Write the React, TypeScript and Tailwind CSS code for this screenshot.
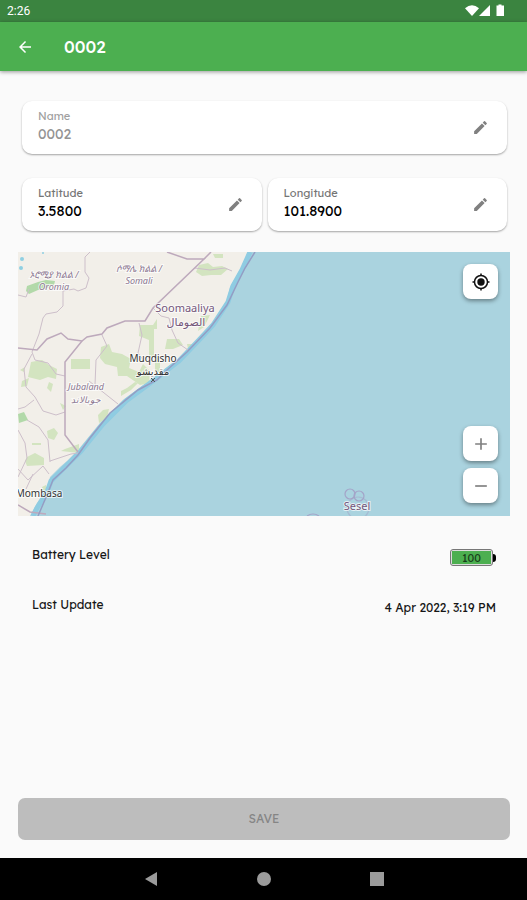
import { useState } from "react";
import { MdArrowBack, MdEdit, MdAdd, MdRemove } from "react-icons/md";

const uiFont = "font-['Lexend_Deca',Lexend,Inter,sans-serif]";

function StatusBar() {
  return (
    <div className="flex h-[22px] items-center justify-between bg-[#3b8440] pr-[22px] pl-[7px] text-white">
      <span className="font-[Roboto,sans-serif] text-xs">2:26</span>
      <svg viewBox="0 0 40 14" className="h-[14px] w-10" fill="currentColor" aria-hidden="true">
        <path d="M0 4.200Q7 -1.500 14 4.200L7 12Z" />
        <path d="M25 1V12H14Z" />
        <path d="M33.500 0.500h3V1.500H39V12H31.500V1.500h2Z" />
      </svg>
    </div>
  );
}

type FieldProps = { id: string; label: string; initial: string; disabled?: boolean };

function Field({ id, label, initial, disabled = false }: FieldProps) {
  const [value, setValue] = useState(initial);
  return (
    <div className="flex h-[53px] min-w-0 flex-1 items-center rounded-[10px] bg-white pr-[18px] pl-4 shadow-[0_1px_2px_rgba(0,0,0,0.35)]">
      <div className="flex min-w-0 flex-1 flex-col pb-1">
        <label htmlFor={id} className={`text-[11px] leading-4 ${disabled ? "text-[#a0a0a0]" : "text-[#757575]"}`}>
          {label}
        </label>
        <input
          id={id}
          value={value}
          disabled={disabled}
          onChange={(e) => setValue(e.target.value)}
          className={`w-full bg-transparent text-[14px] leading-5 outline-none ${disabled ? "text-[#949494]" : "text-black"}`}
        />
      </div>
      <button type="button" aria-label={`Edit ${label}`} className="text-[#808080]">
        <MdEdit size={17} />
      </button>
    </div>
  );
}

function MapDrawing() {
  return (
    <svg
      viewBox="0 0 492 264"
      preserveAspectRatio="xMidYMid slice"
      className="block h-[264px] w-full bg-[#aad3df]"
      role="img"
      aria-label="Map of the Somali coast"
    >
      <rect width="492" height="264" fill="#aad3df" />
      <path
        d="M0 0H230L222 18L212 35L209 48L195 70L182 85L159 108L132 128L105 148L82 171L60 198L49 209L42 215L32 225L30 235L19 251L12 264H0Z"
        fill="#f2efe9"
      />
      <g fill="#d3e4c0">
        <path d="M181 13L190 11L195 15L204 14L210 17L203 23L193 23L184 24L178 20Z M195 2h10v4h-8Z" />
        <path d="M122 73h13l4-6v10h-3v26l6 5v12h-5v-15h-6v-17l-10-4Z" />
        <path d="M149 87h12l4 6-10 4h-8Z M169 92h5v5h-4Z M183 64l9-1-6 12-6 4Z" />
        <path d="M83 95l8-3 3 8 10 2 9 5-2 9 10 4 4-8 7 7-1 12-9 2-13-9h-9l-1-9-12-3-5-6Z" />
        <path d="M53 107h19v10h-19Z M13 110l11-2 7 5 8 4-1 10-8-2-8 3-12-3Z" />
        <path d="M29 179l7-3 4 5-4 7-6-2Z M14 191h9v2h-9Z M9 205l8-4 9 5v7l-17 1-2-5Z" />
        <path d="M80 163l5-5 6-1-2 9-8 5Z M103 139l6-3 8-6 3 1-7 7-10 6Z M47 197l14-5v9l-18-2Z" />
        <path d="M31 130l4 2-2 8-4-4Z M42 151l6 3-3 4Z M4 129l7-3-2 8-6 1Z M24 235l4-2v7h-3Z M2 118l5-3-1 5Z" />
      </g>
      <g fill="#b2d9a9">
        <path d="M9 34l11-4 8-2 9 1-1 4-9 4-7 1-9 4-3-3Z M0 162l6-2 4 8-9 3Z" />
      </g>
      <g fill="#8fcfe2">
        <circle cx="4" cy="7" r="2" />
        <circle cx="3" cy="16" r="2" />
        <circle cx="25" cy="1" r="1" />
      </g>
      <path
        d="M232 0L224 18L215 34L210 50L195 73L181 88L161 109L135 129L108 149L85 172L63 199L51 211L43 219L33 229L29 240L19 256L15 264"
        fill="none"
        stroke="#8fcce2"
        strokeWidth="5"
      />
      <g fill="none" stroke="#cdbfca" strokeWidth="1">
        <path d="M72 0L67 5L67 20L71 26L68 36L60 39L56 37L45 39V54L39 60L28 62L25 66L21 82L14 100" />
        <path d="M0 43L8 45L11 37" />
        <path d="M135 56L143 64L151 66L154 78L160 91L170 98 M121 71L124 83L120 101L126 109" />
        <path d="M84 83L89 94L78 108L77 133 M14 100L17 108L30 111L38 122L47 124" />
        <path d="M14 102L6 117L8 135L17 145L25 159L38 163L47 160 M16 148L7 155L0 157" />
        <path d="M71 129L100 152 M9 168L21 175L30 188L32 210 M0 178L7 191L9 206L0 225M32 209L53 202L60 201M0 217L10 228L25 214L31 222M15 222L8 237M177 16L192 18L207 16L214 19" />
      </g>
      <g fill="none" stroke="#bda9bc" strokeWidth="1.500">
        <path d="M149 0L169 7L186 7L135 56L127 69L107 69L89 76L84 82L69 85L64 89L50 87L43 81L29 87L19 98L0 96" />
        <path d="M186 7L193 0 M64 89L47 110V183L60 200 M0 253L12 260L28 262" />
        <path
          d="M237 0L227 16L220 30L209 53L192 76L169 100L149 118L139 128L120 138L92 161L72 186L60 203L48 216L35 228L29 243L20 264"
          stroke="#949dc4"
        />
      </g>
      <g fill="none" stroke="#a4a4c8" strokeWidth="1.200">
        <circle cx="332" cy="242" r="5" />
        <circle cx="341" cy="244" r="5" />
        <circle cx="340" cy="256" r="11" strokeOpacity="0.5" />
        <path d="M289 264q6-4 12 0" />
      </g>
      <g
        fontFamily="'Noto Sans','Noto Sans Ethiopic','DejaVu Sans',sans-serif"
        textAnchor="middle"
        stroke="#ffffff"
        strokeOpacity="0.7"
        strokeWidth="2"
        paintOrder="stroke"
      >
        <g fill="#8b7690" fontSize="9" fontStyle="italic">
          <text x="36" y="26">ኦሮሚያ ክልል /</text>
          <text x="36" y="38">Oromia</text>
          <text x="121" y="20">ሶማሌ ክልል /</text>
          <text x="121" y="32">Somali</text>
          <text x="68" y="138">Jubaland</text>
          <text x="68" y="151">جوبالاند</text>
        </g>
        <g fill="#75577b" fontSize="11">
          <text x="167" y="60">Soomaaliya</text>
          <text x="168" y="74">الصومال</text>
          <text x="339" y="258">Sesel</text>
        </g>
        <g fill="#333333" fontSize="10">
          <text x="135" y="110">Muqdisho</text>
          <text x="135" y="123">مقديشو</text>
          <text x="21" y="245">Mombasa</text>
        </g>
      </g>
      <path d="M133 126l4 4M137 126l-4 4" stroke="#555555" />
    </svg>
  );
}

const mapButton =
  "flex size-[35px] items-center justify-center rounded-lg bg-white shadow-[0_2px_4px_rgba(0,0,0,0.4)]";

function MapPanel() {
  return (
    <section className="relative mt-[21px]">
      <MapDrawing />
      <div className="absolute top-3 right-3 bottom-[13px] flex flex-col justify-between">
        <button type="button" aria-label="Centre on location" className={mapButton}>
          <svg viewBox="0 0 20 20" className="size-5" aria-hidden="true">
            <circle cx="10" cy="10" r="6.500" fill="none" stroke="#111111" strokeWidth="1.500" />
            <circle cx="10" cy="10" r="3.700" fill="#111111" />
            <path d="M10 1.500v2.500M10 16v2.500M1.500 10h2.500M16 10h2.500" stroke="#111111" strokeWidth="1.500" />
          </svg>
        </button>
        <div className="flex flex-col gap-[7px]">
          <button type="button" aria-label="Zoom in" className={`${mapButton} text-[#808080]`}>
            <MdAdd size={20} />
          </button>
          <button type="button" aria-label="Zoom out" className={`${mapButton} text-[#808080]`}>
            <MdRemove size={20} />
          </button>
        </div>
      </div>
    </section>
  );
}

function Battery() {
  return (
    <div className="flex items-center">
      <div className="rounded-[3px] border border-[#777777] bg-[#dddddd] p-px">
        <div className="flex h-[13px] w-[39px] items-center justify-center bg-[#4caf50] text-[11px] text-[#173d19]">
          100
        </div>
      </div>
      <div className="h-2 w-[3px] rounded-r-sm bg-black" />
    </div>
  );
}

export default function App() {
  return (
    <div className={`flex min-h-screen flex-col bg-[#fafafa] text-[#161616] ${uiFont}`}>
      <StatusBar />
      <header className="flex h-[49px] items-center gap-[30px] bg-[#4caf50] pl-4 text-white shadow-[0_1px_4px_rgba(0,0,0,0.4)]">
        <button type="button" aria-label="Back">
          <MdArrowBack size={18} />
        </button>
        <h1 className="text-[17px] font-medium">0002</h1>
      </header>
      <main className="flex flex-1 flex-col pt-[30px] pr-[17px] pb-[18px] pl-[18px]">
        <form className="flex flex-col gap-6 pr-[3px] pl-1">
          <div className="flex">
            <Field id="name" label="Name" initial="0002" disabled />
          </div>
          <div className="flex gap-[6px]">
            <Field id="latitude" label="Latitude" initial="3.5800" />
            <Field id="longitude" label="Longitude" initial="101.8900" />
          </div>
        </form>
        <MapPanel />
        <dl className="mt-[29px] flex flex-col gap-[29px] px-[14px] text-[12px] leading-5">
          <div className="flex items-start justify-between">
            <dt>Battery Level</dt>
            <dd className="pt-1">
              <Battery />
            </dd>
          </div>
          <div className="flex items-start justify-between">
            <dt>Last Update</dt>
            <dd className="pt-[3px]">4 Apr 2022, 3:19 PM</dd>
          </div>
        </dl>
        <button
          type="button"
          disabled
          className="mt-auto h-[42px] rounded-[7px] bg-[#bdbdbd] text-[12px] text-[#858585]"
        >
          SAVE
        </button>
      </main>
      <nav className="flex h-[42px] items-center justify-center gap-[99px] bg-black text-[#9b9b9b]">
        <button type="button" aria-label="System back">
          <svg viewBox="0 0 14 14" className="size-[14px]" fill="currentColor">
            <path d="M13 0V14L1 7Z" />
          </svg>
        </button>
        <button type="button" aria-label="Home" className="size-[14px] rounded-full bg-current" />
        <button type="button" aria-label="Recent apps" className="size-[14px] bg-current" />
      </nav>
    </div>
  );
}
